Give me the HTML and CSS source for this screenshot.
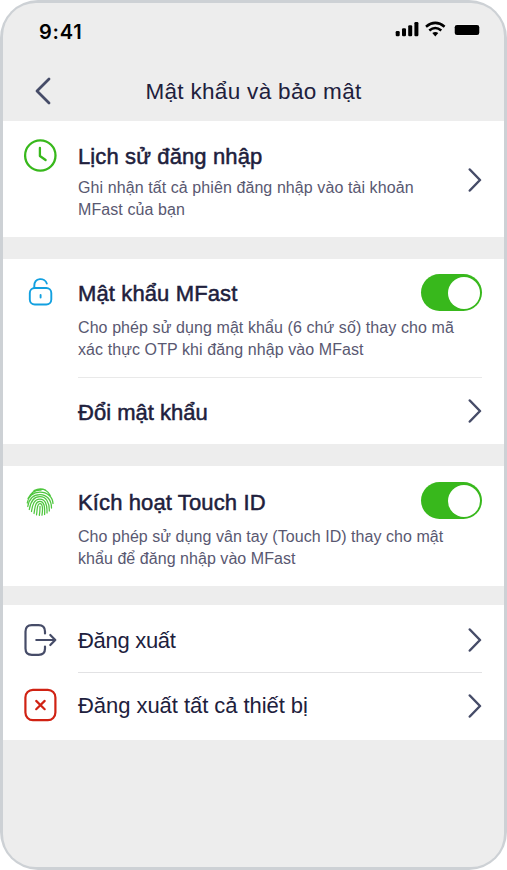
FILE: index.html
```html
<!DOCTYPE html>
<html lang="vi">
<head>
<meta charset="utf-8">
<title>Mật khẩu và bảo mật</title>
<link rel="stylesheet" href="styles.css">
</head>
<body>
<svg class="sprite" aria-hidden="true">
  <symbol id="chevron" viewBox="0 0 14 24"><path d="M1.8 1.5 12 12 1.8 22.5"/></symbol>
</svg>
<main class="phone">
<div class="screen">
  <header class="header">
    <div class="status">
      <span class="time">9:41</span>
      <svg class="signals" width="88" height="20" viewBox="0 0 88 20">
        <g fill="#000">
          <rect x=".7" y="11" width="4" height="5.2" rx="1.2"/>
          <rect x="7" y="8.3" width="4" height="7.9" rx="1.2"/>
          <rect x="13.2" y="5.2" width="4" height="11" rx="1.2"/>
          <rect x="19.4" y="2" width="4" height="14.2" rx="1.2"/>
          <path d="M37.300 13Q40.300 11.200 43.300 13L40.300 16.400Z"/>
        </g>
        <g fill="none" stroke="#000" stroke-width="2.600">
          <path d="M31 6.700Q40.300-.9 49.600 6.700"/>
          <path d="M34.300 10.500Q40.300 5.500 46.300 10.500"/>
        </g>
        <rect x="59" y="4.200" width="26" height="11.600" rx="3" fill="#f8f8f8"/>
        <rect x="59.700" y="4.900" width="24.600" height="10.200" rx="2.300"/>
      </svg>
    </div>
    <div class="navbar">
      <svg class="back" width="16" height="28" viewBox="0 0 16 28"><path d="M14 2 2 14 14 26"/></svg>
      <h1>Mật khẩu và bảo mật</h1>
    </div>
  </header>

  <section class="group history">
    <svg class="icon" width="34" height="34" viewBox="0 0 34 34" fill="none" stroke="#38b81c" stroke-width="2.300" stroke-linecap="round" stroke-linejoin="round"><circle cx="17.300" cy="17.500" r="15.200"/><path d="M16.900 10V18L22.600 22"/></svg>
    <div class="text">
      <h2 class="t-history">Lịch sử đăng nhập</h2>
      <p>Ghi nhận tất cả phiên đăng nhập vào tài khoản<br>MFast của bạn</p>
    </div>
    <svg class="chevron"><use href="#chevron"/></svg>
  </section>

  <section class="group password">
    <div class="setting">
      <svg class="icon" width="34" height="34" viewBox="0 0 34 34" fill="none" stroke="#12a0e0" stroke-width="1.900" stroke-linecap="round"><rect x="6.800" y="13" width="21.500" height="16.500" rx="5"/><path d="M11.300 13V10.800C11.300 2.500 21.800 2.200 23.800 8.500M17.600 20V22.500"/></svg>
      <div class="text">
        <h2>Mật khẩu MFast</h2>
        <p>Cho phép sử dụng mật khẩu (6 chứ số) thay cho mã<br>xác thực OTP khi đăng nhập vào MFast</p>
      </div>
      <span class="toggle"></span>
    </div>
    <div class="row change">
      <h2 class="t-change">Đổi mật khẩu</h2>
      <svg class="chevron"><use href="#chevron"/></svg>
    </div>
  </section>

  <section class="group touch">
    <svg class="icon" width="34" height="34" viewBox="0 0 34 34" fill="none" stroke="#4fc63e" stroke-width="1.250" stroke-linecap="round">
      <path d="M7.200 10.500C12 2.500 22.500 1.700 27.300 10.500M5 13.500C9 5.500 15 5 18 5.200M4.200 18C5.500 11.500 9.500 7.300 17 7.200C24.500 7.200 29.800 12 30 18.500M4.800 21.500C6 14 10 9.500 17 9.500C24 9.500 28.500 15 28.500 23M6.300 24.500C7.500 17 10.500 11.700 17 11.700C23 11.700 26.500 17 26.300 26M8.500 26.500C9.500 20 11 14 17 14C22 14 24.300 19 24 28M11 28.500C12 23 12 16.300 17 16.300C21 16.300 22 21 21.600 29.500M13.500 29.800C14.500 25 13.500 18.600 17 18.600C20 18.600 19.800 25 19 30.200M16.300 30.300C17 27 17 24 17 21.300M11 5.500Q17 2.500 22.500 5"/>
    </svg>
    <div class="text">
      <h2>Kích hoạt Touch ID</h2>
      <p>Cho phép sử dụng vân tay (Touch ID) thay cho mật<br>khẩu để đăng nhập vào MFast</p>
    </div>
    <span class="toggle"></span>
  </section>

  <section class="group logout">
    <div class="action">
      <svg class="icon" width="34" height="34" viewBox="0 0 34 34" fill="none" stroke="#464c68" stroke-width="2.200" stroke-linecap="round" stroke-linejoin="round"><path d="M22 10.500V8.500Q22 2.200 15.600 2.200H8.800Q2.500 2.200 2.500 8.500V25.500Q2.500 31.800 8.800 31.800H15.600Q22 31.800 22 25.500V23.500M13.300 17H32.300M27.300 12 32.300 17 27.300 22"/></svg>
      <div class="row"><span class="label t-out">Đăng xuất</span><svg class="chevron"><use href="#chevron"/></svg></div>
    </div>
    <div class="action">
      <svg class="icon" width="34" height="34" viewBox="0 0 34 34" fill="none" stroke="#d02213" stroke-width="2.200" stroke-linecap="round"><rect x="2.400" y="1.900" width="30" height="30.200" rx="7.500"/><path d="M13.200 12.900 21.700 21.200M21.700 12.900 13.200 21.200"/></svg>
      <div class="row"><span class="label t-all">Đăng xuất tất cả thiết bị</span><svg class="chevron"><use href="#chevron"/></svg></div>
    </div>
  </section>
</div>
</main>
</body>
</html>
```
FILE: styles.css
```css
* { box-sizing: border-box; }
html, body { margin: 0; background: #fff; }
body { font-family: "Liberation Sans", Arial, sans-serif; color: #20203c; }
h1, h2, p { margin: 0; font-weight: 400; white-space: nowrap; }
svg { display: block; flex: none; }
.sprite { position: absolute; width: 0; height: 0; }

.phone {
  width: 507px;
  height: 870px;
  padding: 3px;
  border-radius: 38px;
  background: #cdd1d5;
}
.screen {
  height: 864px;
  border-radius: 33px;
  background: #ededed;
  overflow: hidden;
}
.header { height: 118px; }
.status {
  height: 57px;
  padding: 17px 21px 0 36px;
  display: flex;
  justify-content: space-between;
}
.time { font: 600 20px/24px Inter, sans-serif; letter-spacing: .8px; color: #000; }
.navbar {
  height: 61px;
  padding: 0 32px;
  display: grid;
  grid-template-columns: 16px 1fr 16px;
  align-items: start;
}
.back { margin-top: 17px; fill: none; stroke: #464c68; stroke-width: 2.8; stroke-linecap: round; stroke-linejoin: round; }
h1 { margin-top: 18px; font-size: 22.5px; line-height: 28px; letter-spacing: .32px; text-align: center; }

.group { background: #fff; display: flex; padding: 0 22px 0 20px; }
.icon { margin-right: 21px; }
.text { flex: 1; }
h2 { font-size: 22px; line-height: 28px; letter-spacing: .12px; -webkit-text-stroke: .5px currentColor; }
p { font-size: 16px; line-height: 21.500px; letter-spacing: .085px; color: #595871; }
.chevron { width: 14px; height: 24px; fill: none; stroke: #464c68; stroke-width: 2.5; stroke-linecap: round; stroke-linejoin: round; }

.toggle {
  width: 61px;
  height: 37px;
  flex: none;
  padding: 2.500px 2px;
  border-radius: 19px;
  background: #38b81c;
  display: flex;
  justify-content: flex-end;
}
.toggle::before { content: ""; width: 32px; height: 32px; border-radius: 50%; background: #fff; }

.history { height: 116px; padding-top: 17px; }
.history .text { padding-top: 5px; }
.history p { margin-top: 6px; }
.history .chevron { margin-top: 30px; }

.password { height: 185px; margin-top: 22px; flex-direction: column; padding-top: 16px; }
.setting { display: flex; height: 102px; }
.text + .toggle { margin-left: -60px; }
.setting .toggle { margin-top: -1px; }
.password .text { padding-top: 5px; }
.password p, .touch p { margin-top: 9px; }
.row { flex: 1; display: flex; align-items: center; justify-content: space-between; }
.change { margin-left: 55px; border-top: 1.500px solid #e9e9e9; }
.t-change { padding-top: 3px; letter-spacing: .02px; }

.touch { height: 120px; margin-top: 22px; padding-top: 16px; }
.touch .icon { margin-top: 3px; }
.touch .text { padding-top: 7px; }
.touch p { letter-spacing: .05px; }

.logout { height: 135px; margin-top: 19px; flex-direction: column; }
.action { display: flex; align-items: center; height: 68px; }
.action .row { height: 100%; padding-top: 3px; }
.action:first-child .icon { margin-top: 2px; }
.action:first-child .row { border-bottom: 1px solid #e2e2e4; }
.action + .action { height: 67px; }
.action + .action .icon { margin-bottom: 3px; }
.action + .action .row { padding: 0 0 2px; }
.label { font-size: 22px; line-height: 28px; white-space: nowrap; }
.t-out { padding-top: 2px; letter-spacing: -.3px; }
.t-all { letter-spacing: -.05px; }
```
